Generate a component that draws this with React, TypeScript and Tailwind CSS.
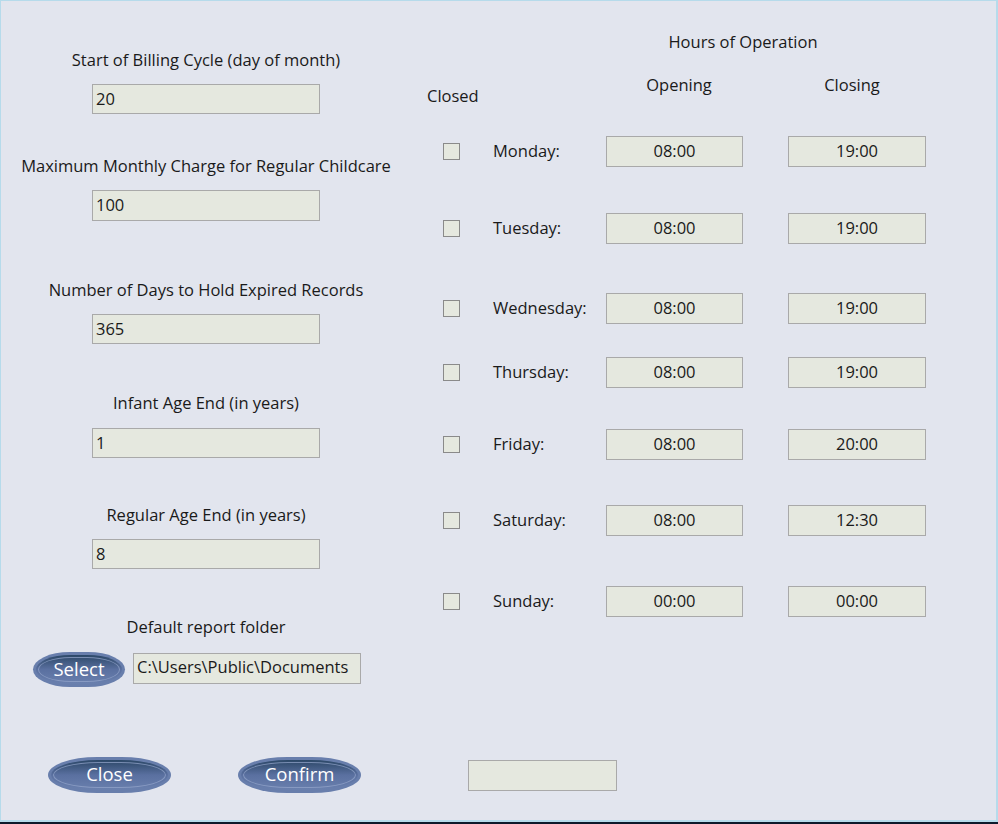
import React from "react";

const font = { fontFamily: '"Open Sans", "Noto Sans", sans-serif' };

function Pill({ label, w, h }: { label: string; w: string; h: string }) {
  return (
    <div className={`${w} ${h} rounded-[40%/50%] bg-[#687eac] p-[3px] shrink-0`}>
      <div className="relative w-full h-full rounded-[40%/50%] bg-gradient-to-b from-[#2c4868] via-[#5a70a0] to-[#6a80ae] flex items-center justify-center overflow-hidden">
        <div className="absolute inset-[2px] rounded-[40%/50%] border border-[#95a6cc] opacity-70" />
        <span className="relative text-white text-[18.5px] leading-none pb-[1px]">{label}</span>
      </div>
    </div>
  );
}

function LeftField({ label, value, labelMt, inputMt, h }: { label: string; value: string; labelMt: string; inputMt: string; h: string }) {
  return (
    <>
      <div className={`${labelMt} h-[22px] leading-[22px] text-center whitespace-nowrap`}>{label}</div>
      <div className={`${inputMt} w-[228px] ${h} bg-[#e5e8df] border border-[#a9a9a9] flex items-center pl-[3px]`}>
        {value}
      </div>
    </>
  );
}

function DayRow({ mt, day, open, close }: { mt: string; day: string; open: string; close: string }) {
  return (
    <div className={`${mt} flex items-center h-[31px]`}>
      <div className="ml-[32px] w-[17px] h-[17px] border border-[#8a8a8a] bg-[#e5e8df] shrink-0" />
      <div className="ml-[33px] w-[113px] shrink-0">{day}</div>
      <div className="w-[137px] h-[31px] bg-[#e5e8df] border border-[#a9a9a9] flex items-center justify-center shrink-0">{open}</div>
      <div className="ml-[45px] w-[138px] h-[31px] bg-[#e5e8df] border border-[#a9a9a9] flex items-center justify-center shrink-0">{close}</div>
    </div>
  );
}

export default function App() {
  return (
    <div className="w-[998px] h-[824px] bg-[#0d1a2c] overflow-hidden text-[#1a1a1a] text-[16.5px]" style={font}>
      <div className="w-[998px] h-[822px] bg-[#e2e5ee] border-l border-t border-r-[2px] border-b-[2px] border-[#b6dbeb] flex flex-col">
        <div className="flex">
          {/* Left column */}
          <div className="w-[410px] flex flex-col items-center pt-[48px]">
            <LeftField label="Start of Billing Cycle (day of month)" value="20" labelMt="mt-0" inputMt="mt-[13px]" h="h-[30px]" />
            <LeftField label="Maximum Monthly Charge for Regular Childcare" value="100" labelMt="mt-[41px]" inputMt="mt-[13px]" h="h-[31px]" />
            <LeftField label="Number of Days to Hold Expired Records" value="365" labelMt="mt-[58px]" inputMt="mt-[13px]" h="h-[30px]" />
            <LeftField label="Infant Age End (in years)" value="1" labelMt="mt-[48px]" inputMt="mt-[14px]" h="h-[30px]" />
            <LeftField label="Regular Age End (in years)" value="8" labelMt="mt-[46px]" inputMt="mt-[13px]" h="h-[30px]" />
            <div className="mt-[47px] h-[22px] leading-[22px] text-center">Default report folder</div>
            <div className="mt-[14px] self-start ml-[32px] flex items-start">
              <Pill label="Select" w="w-[92px]" h="h-[35px]" />
              <div className="ml-[8px] mt-[1px] w-[228px] h-[31px] bg-[#e5e8df] border border-[#a9a9a9] overflow-hidden pl-[3px] pt-[1px] leading-[23px] whitespace-nowrap">
                <div>C:\Users\Public\Documents</div>
                <div>\Childcare Reports\</div>
              </div>
            </div>
          </div>

          {/* Right column */}
          <div className="flex flex-col pt-[30px]">
            <div className="ml-[195px] w-[274px] text-center h-[22px] leading-[22px]">Hours of Operation</div>
            <div className="mt-[21px] flex items-start">
              <div className="ml-[16px] w-[52px] mt-[11px] h-[22px] leading-[22px]">Closed</div>
              <div className="ml-[127px] w-[146px] text-center h-[22px] leading-[22px]">Opening</div>
              <div className="w-[200px] text-center h-[22px] leading-[22px]">Closing</div>
            </div>
            <DayRow mt="mt-[29px]" day="Monday:" open="08:00" close="19:00" />
            <DayRow mt="mt-[46px]" day="Tuesday:" open="08:00" close="19:00" />
            <DayRow mt="mt-[49px]" day="Wednesday:" open="08:00" close="19:00" />
            <DayRow mt="mt-[33px]" day="Thursday:" open="08:00" close="19:00" />
            <DayRow mt="mt-[41px]" day="Friday:" open="08:00" close="20:00" />
            <DayRow mt="mt-[45px]" day="Saturday:" open="08:00" close="12:30" />
            <DayRow mt="mt-[50px]" day="Sunday:" open="00:00" close="00:00" />
          </div>
        </div>

        {/* Bottom buttons */}
        <div className="mt-[70px] flex items-center">
          <div className="ml-[47px]">
            <Pill label="Close" w="w-[123px]" h="h-[36px]" />
          </div>
          <div className="ml-[67px]">
            <Pill label="Confirm" w="w-[123px]" h="h-[36px]" />
          </div>
          <div className="ml-[107px] w-[149px] h-[31px] bg-[#e5e8df] border border-[#a9a9a9]" />
        </div>
      </div>
    </div>
  );
}
